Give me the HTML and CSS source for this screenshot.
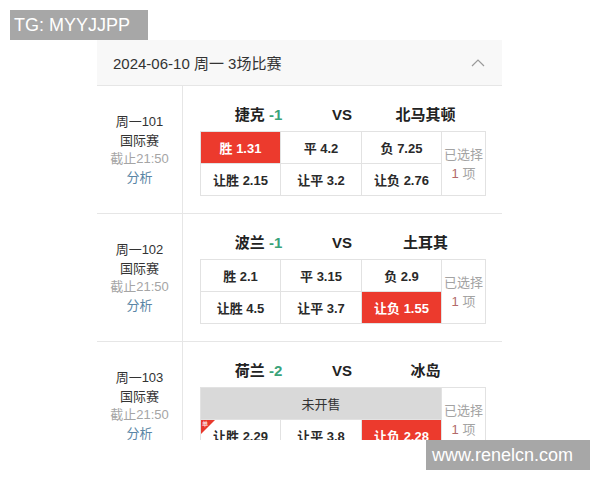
FILE: index.html
```html
<!DOCTYPE html>
<html lang="zh">
<head>
<meta charset="utf-8">
<link rel="stylesheet" href="styles.css">
</head>
<body>
<div class="page">
  <div class="card">
    <div class="day-head">
      <span class="day-title">2024-06-10 周一 3场比赛</span>
      <svg class="chev" width="14" height="9" viewBox="0 0 14 9"><polyline points="1,8 7,2 13,8" fill="none" stroke="#9a9a9a" stroke-width="1.2"/></svg>
    </div>

    <div class="match">
      <div class="info">
        <div class="num">周一101</div>
        <div class="league">国际赛</div>
        <div class="deadline">截止21:50</div>
        <div class="analysis">分析</div>
      </div>
      <div class="main">
        <div class="teams">
          <div class="team">捷克 <span class="hcp">-1</span></div>
          <div class="vs">VS</div>
          <div class="team">北马其顿</div>
        </div>
        <div class="odds">
          <div class="cell sel">胜 1.31</div>
          <div class="cell">平 4.2</div>
          <div class="cell">负 7.25</div>
          <div class="chosen"><div class="chosen-t">已选择<br><span class="cnt">1</span> 项</div></div>
          <div class="cell">让胜 2.15</div>
          <div class="cell">让平 3.2</div>
          <div class="cell">让负 2.76</div>
        </div>
      </div>
    </div>

    <div class="match">
      <div class="info">
        <div class="num">周一102</div>
        <div class="league">国际赛</div>
        <div class="deadline">截止21:50</div>
        <div class="analysis">分析</div>
      </div>
      <div class="main">
        <div class="teams">
          <div class="team">波兰 <span class="hcp">-1</span></div>
          <div class="vs">VS</div>
          <div class="team">土耳其</div>
        </div>
        <div class="odds">
          <div class="cell">胜 2.1</div>
          <div class="cell">平 3.15</div>
          <div class="cell">负 2.9</div>
          <div class="chosen"><div class="chosen-t">已选择<br><span class="cnt">1</span> 项</div></div>
          <div class="cell">让胜 4.5</div>
          <div class="cell">让平 3.7</div>
          <div class="cell sel">让负 1.55</div>
        </div>
      </div>
    </div>

    <div class="match">
      <div class="info">
        <div class="num">周一103</div>
        <div class="league">国际赛</div>
        <div class="deadline">截止21:50</div>
        <div class="analysis">分析</div>
      </div>
      <div class="main">
        <div class="teams">
          <div class="team">荷兰 <span class="hcp">-2</span></div>
          <div class="vs">VS</div>
          <div class="team">冰岛</div>
        </div>
        <div class="odds">
          <div class="closed">未开售</div>
          <div class="chosen"><div class="chosen-t">已选择<br><span class="cnt">1</span> 项</div></div>
          <div class="cell single"><span class="badge"><span class="badge-t">单</span></span>让胜 2.29</div>
          <div class="cell">让平 3.8</div>
          <div class="cell sel">让负 2.28</div>
        </div>
      </div>
    </div>
  </div>

  <div class="wm wm-top">TG: MYYJJPP</div>
  <div class="wm wm-bottom">www.renelcn.com</div>
</div>
</body>
</html>
```

FILE: styles.css
```css
* { box-sizing: border-box; }
html, body { margin: 0; padding: 0; background: #fff; }
body {
  font-family: "Liberation Sans", "Noto Sans CJK SC", sans-serif;
  color: #333;
  width: 600px;
  height: 480px;
  overflow: hidden;
}
.page {
  position: relative;
  width: 600px;
  height: 480px;
  padding-top: 40px;
}
.card {
  margin-left: 97px;
  width: 405px;
  height: 400px;
  overflow: hidden;
  background: #fff;
}
.day-head {
  height: 46px;
  background: #f8f8f8;
  border-bottom: 1px solid #e6e6e6;
  display: flex;
  align-items: center;
  justify-content: space-between;
  padding: 0 17px 0 16px;
}
.day-title {
  font-size: 15px;
  color: #333;
}
.chev { display: block; margin-top: -1px; }

.match {
  display: flex;
  border-bottom: 1px solid #e6e6e6;
}
.info {
  width: 86px;
  flex: none;
  border-right: 1px solid #e6e6e6;
  display: flex;
  flex-direction: column;
  justify-content: center;
  align-items: center;
  font-size: 13px;
  line-height: 18.5px;
  padding-top: 1px;
}
.num, .league { color: #333; }
.deadline { color: #a5a5a5; }
.analysis { color: #5a86a6; }

.main {
  flex: 1;
  padding: 19px 0 17px 17px;
}
.teams {
  display: grid;
  grid-template-columns: 83px 84px 83px;
  margin-left: 17px;
  height: 20px;
  line-height: 20px;
  margin-bottom: 6px;
  font-size: 15px;
  font-weight: bold;
  color: #222;
  text-align: center;
}
.hcp { color: #3aa37a; }
.vs { font-size: 15px; }

.odds {
  display: grid;
  grid-template-columns: 79px 80px 79px 43px;
  grid-template-rows: 31px 31px;
  gap: 1px;
  padding: 1px;
  background: #e2e2e2;
  width: 286px;
}
.cell {
  position: relative;
  background: #fff;
  display: flex;
  align-items: center;
  justify-content: center;
  font-size: 13px;
  font-weight: bold;
  color: #2a2a2a;
}
.cell.sel {
  background: #ec3a2d;
  color: #fff;
}
.chosen {
  grid-column: 4;
  grid-row: 1 / span 2;
  background: #fff;
  display: flex;
  align-items: center;
  justify-content: center;
}
.chosen-t {
  text-align: center;
  font-size: 13px;
  line-height: 19px;
  color: #a3a3a3;
  white-space: nowrap;
}
.cnt { color: #b26a6a; }
.closed {
  grid-column: 1 / span 3;
  background: #d9d9d9;
  display: flex;
  align-items: center;
  justify-content: center;
  font-size: 13px;
  color: #333;
}
.badge {
  position: absolute;
  left: 0;
  top: 0;
  width: 0;
  height: 0;
  border-top: 14px solid #e8382c;
  border-right: 14px solid transparent;
}
.badge-t {
  position: absolute;
  left: 1px;
  top: -14px;
  font-size: 6px;
  line-height: 8px;
  color: #fff;
  font-weight: normal;
}

.wm {
  position: absolute;
  background: #a7a7a7;
  color: #fff;
  font-size: 18px;
  display: flex;
  align-items: center;
}
.wm-top {
  left: 10px;
  top: 10px;
  width: 138px;
  height: 30px;
  padding-left: 4px;
}
.wm-bottom {
  left: 426px;
  top: 440px;
  width: 164px;
  height: 30px;
  padding-left: 6px;
}
```
